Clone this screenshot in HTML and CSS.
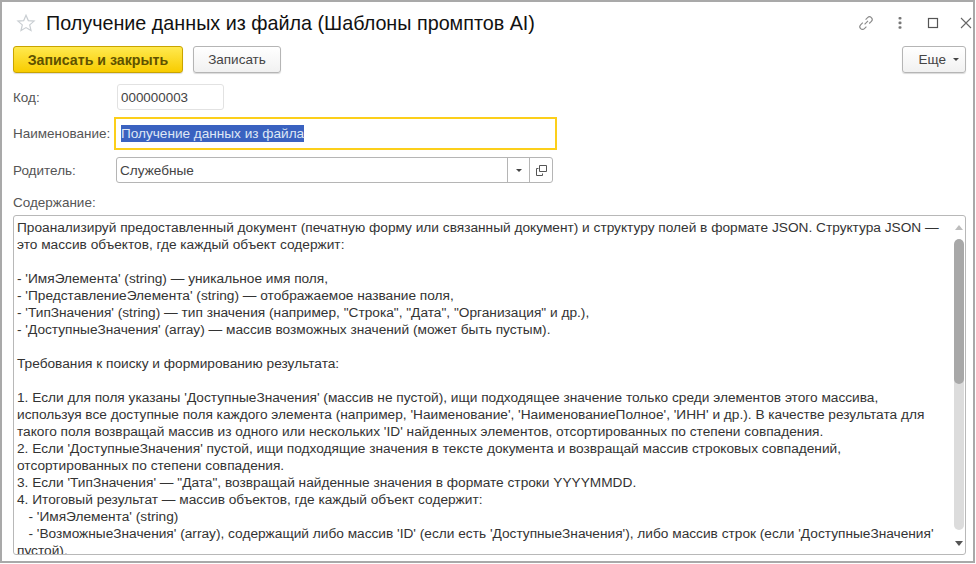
FILE: index.html
```html
<!DOCTYPE html>
<html lang="ru">
<head>
<meta charset="utf-8">
<title>Получение данных из файла</title>
<link rel="stylesheet" href="styles.css">
</head>
<body>
<div class="window">
  <header class="title-bar">
    <svg class="star" width="20" height="20" viewBox="0 0 20 20"><path d="M10 2.2l2.3 5.4 5.8.5-4.4 3.8 1.3 5.7-5-3-5 3 1.3-5.7-4.4-3.8 5.800-.5z" fill="#fff" stroke="#c9ced2" stroke-width="1.2"/></svg>
    <h1 class="title">Получение данных из файла (Шаблоны промптов AI)</h1>
    <div class="window-tools">
      <svg class="tool-link" width="18" height="18" viewBox="0 0 18 18" fill="none" stroke="#8a8a8a" stroke-width="1.1"><path d="M7.6 10.4l3.4-3.6"/><path d="M8.6 5.6l2-2a2.6 2.6 0 0 1 3.8 3.7l-2.2 2.2"/><path d="M9.4 12.6l-2 2a2.6 2.6 0 0 1-3.8-3.7l2.2-2.2"/></svg>
      <svg class="tool-dots" width="4" height="14" viewBox="0 0 4 14" fill="#777"><rect x="0.5" y="1" width="3" height="2.6" rx="1"/><rect x="0.5" y="5.6" width="3" height="2.6" rx="1"/><rect x="0.5" y="10.2" width="3" height="2.6" rx="1"/></svg>
      <svg width="12" height="12" viewBox="0 0 12 12" fill="none" stroke="#555" stroke-width="1.2"><rect x="1.5" y="1.5" width="9" height="9"/></svg>
      <svg width="12" height="12" viewBox="0 0 12 12" fill="none" stroke="#666" stroke-width="1.1"><path d="M1 1l10 10M11 1L1 11"/></svg>
    </div>
  </header>

  <div class="toolbar">
    <button class="btn btn-primary">Записать и закрыть</button>
    <button class="btn btn-plain">Записать</button>
    <button class="btn btn-more">Еще<span class="caret"></span></button>
  </div>

  <div class="row row-code">
    <label class="label">Код:</label>
    <div class="field field-code">000000003</div>
  </div>
  <div class="row row-name">
    <label class="label">Наименование:</label>
    <div class="field field-name"><span class="selected">Получение данных из файла</span></div>
  </div>
  <div class="row row-parent">
    <label class="label">Родитель:</label>
    <div class="field field-parent">
      <span class="parent-value">Служебные</span>
      <span class="field-btn"><span class="caret"></span></span>
      <span class="field-btn"><svg width="11" height="11" viewBox="0 0 11 11" fill="none" stroke="#555" stroke-width="1"><path d="M3.5.5h7v6h-7z"/><path d="M2.5 3.500h-2v7h6V8.500"/></svg></span>
    </div>
  </div>

  <div class="content-label">Содержание:</div>
  <div class="memo">
    <div class="memo-text">
      <div class="line">Проанализируй предоставленный документ (печатную форму или связанный документ) и структуру полей в формате JSON. Структура JSON —</div>
      <div class="line">это массив объектов, где каждый объект содержит:</div>
      <div class="line"></div>
      <div class="line">- 'ИмяЭлемента' (string) — уникальное имя поля,</div>
      <div class="line">- 'ПредставлениеЭлемента' (string) — отображаемое название поля,</div>
      <div class="line">- 'ТипЗначения' (string) — тип значения (например, "Строка", "Дата", "Организация" и др.),</div>
      <div class="line">- 'ДоступныеЗначения' (array) — массив возможных значений (может быть пустым).</div>
      <div class="line"></div>
      <div class="line">Требования к поиску и формированию результата:</div>
      <div class="line"></div>
      <div class="line">1. Если для поля указаны 'ДоступныеЗначения' (массив не пустой), ищи подходящее значение только среди элементов этого массива,</div>
      <div class="line">используя все доступные поля каждого элемента (например, 'Наименование', 'НаименованиеПолное', 'ИНН' и др.). В качестве результата для</div>
      <div class="line">такого поля возвращай массив из одного или нескольких 'ID' найденных элементов, отсортированных по степени совпадения.</div>
      <div class="line">2. Если 'ДоступныеЗначения' пустой, ищи подходящие значения в тексте документа и возвращай массив строковых совпадений,</div>
      <div class="line">отсортированных по степени совпадения.</div>
      <div class="line">3. Если 'ТипЗначения' — "Дата", возвращай найденные значения в формате строки YYYYMMDD.</div>
      <div class="line">4. Итоговый результат — массив объектов, где каждый объект содержит:</div>
      <div class="line">&nbsp;&nbsp;&nbsp;- 'ИмяЭлемента' (string)</div>
      <div class="line">&nbsp;&nbsp;&nbsp;- 'ВозможныеЗначения' (array), содержащий либо массив 'ID' (если есть 'ДоступныеЗначения'), либо массив строк (если 'ДоступныеЗначения'</div>
      <div class="line">пустой).</div>
    </div>
    <div class="scrollbar">
      <span class="arrow-up"></span>
      <div class="track"><div class="thumb"></div></div>
      <span class="arrow-down"></span>
    </div>
  </div>
</div>
</body>
</html>
```
FILE: styles.css
```css
* { box-sizing: border-box; }
html, body { margin: 0; height: 100%; background: #fff; }
body { font-family: "Liberation Sans", Arial, sans-serif; font-size: 13.6px; color: #3a3a3a; overflow: hidden; }
.window {
  width: 975px; height: 563px;
  border: 2px solid #a9a9a9;
  padding: 0 7px 0 11px;
  display: flex; flex-direction: column;
  background: #fff;
}
.title-bar { height: 44px; display: flex; align-items: center; flex: none; padding-bottom: 2px; }
.star { margin-left: 3px; flex: none; }
.title { margin: 0 0 0 10px; font-size: 19.75px; font-weight: 400; color: #111; white-space: nowrap; }
.window-tools { margin-left: auto; margin-right: -6px; display: flex; align-items: center; gap: 21px; }
.tool-link { margin-right: 2px; }
.tool-dots { margin-right: 4px; }
.toolbar { display: flex; align-items: center; height: 27px; flex: none; }
.btn {
  font-family: inherit; font-size: 13.5px; height: 27px; border-radius: 3px; padding: 0; color: #444;
  border: 1px solid #b5b5b5; background: linear-gradient(#fff, #f1f1f1);
  box-shadow: 0 1px 1px rgba(0,0,0,.15);
}
.btn-primary { width: 170px; font-size: 14.2px; font-weight: 700; background: linear-gradient(#ffe94f, #f8cc00); border-color: #c9a400; color: #5f5200; }
.btn-plain { width: 88px; margin-left: 10px; }
.btn-more { width: 64px; margin-left: auto; display: flex; align-items: center; justify-content: flex-end; gap: 7px; padding-right: 6px; }
.caret { display: inline-block; width: 0; height: 0; border: 3px solid transparent; border-top: 3.5px solid #444; border-bottom: 0; }
.row { display: flex; align-items: center; flex: none; }
.label { width: 104px; color: #555; flex: none; white-space: nowrap; font-size: 13.5px; }
.row-code { margin-top: 11px; }
.row-name { margin-top: 7px; }
.row-parent { margin-top: 7px; }
.field { background: #fff; display: flex; align-items: center; }
.field-code { width: 107px; height: 26px; border: 1px solid #e2e2e2; border-radius: 3px; padding-left: 3px; color: #444; font-size: 13.4px; }
.field-name { width: 443px; height: 33px; border: 2px solid #fccf1a; padding-left: 5px; margin-left: -3px; }
.selected { display: inline-block; height: 17px; line-height: 17px; background: #3a62c0; color: #dfe7f5; }
.field-parent { width: 437px; height: 26px; margin-left: -1px; border: 1px solid #b5b5b5; border-radius: 3px; padding-left: 3px; color: #444; }
.parent-value { flex: 1; }
.field-btn { width: 22px; height: 100%; border-left: 1px solid #b5b5b5; display: flex; align-items: center; justify-content: center; flex: none; }
.field-btn + .field-btn { width: 23px; }
.content-label { margin-top: 11px; height: 17px; color: #555; line-height: 17px; flex: none; font-size: 13.5px; }
.memo { margin-top: 4px; height: 340px; border: 1px solid #b8b8b8; border-radius: 3px; display: flex; overflow: hidden; flex: none; }
.memo-text { flex: 1; padding: 3px 0 0 3px; overflow: hidden; color: #333; font-size: 13.69px; }
.line { height: 17px; line-height: 17px; white-space: nowrap; }
.scrollbar { width: 13px; flex: none; display: flex; flex-direction: column; align-items: center; }
.arrow-up { margin-top: 9px; border: 4px solid transparent; border-bottom: 5px solid #bdbdbd; border-top: 0; }
.arrow-down { margin-bottom: 8px; border: 4px solid transparent; border-top: 5px solid #555; border-bottom: 0; }
.track { flex: 1; width: 10px; margin: 9px 0 11px; background: #dcdcdc; border-radius: 5px; overflow: hidden; }
.thumb { height: 145px; background: #a8a8a8; border-radius: 5px; }
```
